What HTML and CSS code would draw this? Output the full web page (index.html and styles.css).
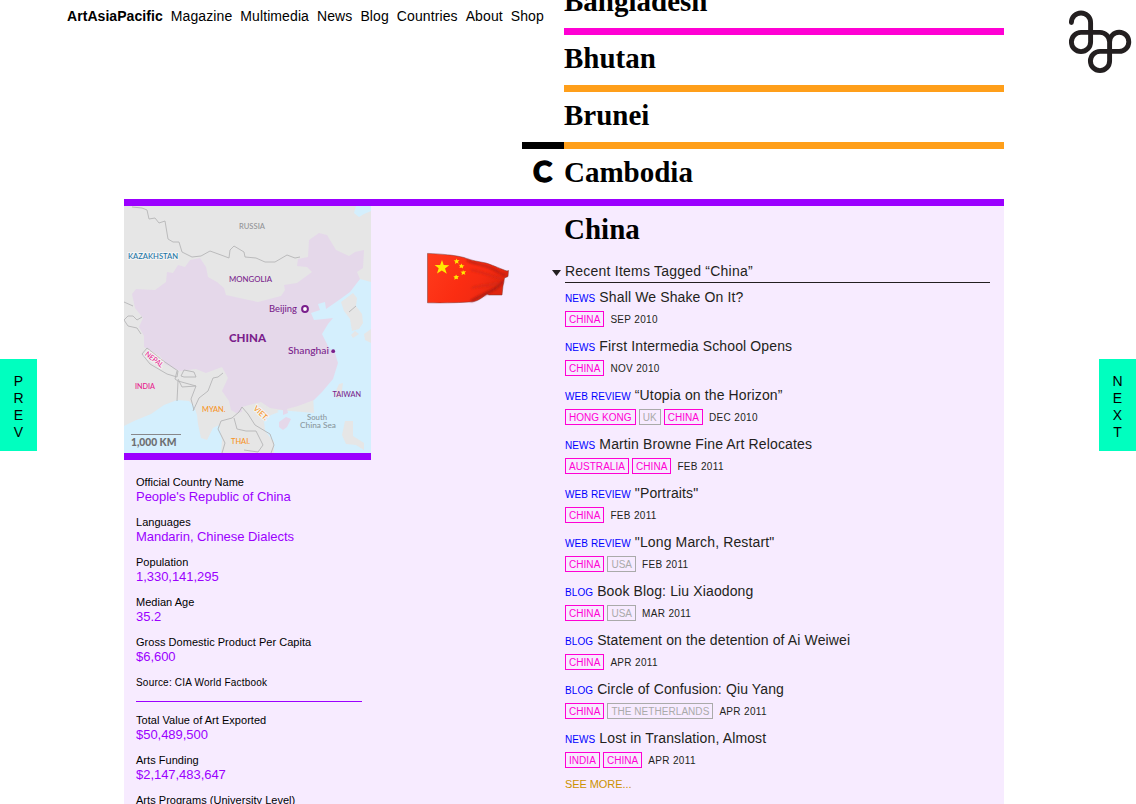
FILE: index.html
```html
<!DOCTYPE html>
<html lang="en">
<head>
<meta charset="utf-8">
<title>ArtAsiaPacific: Countries</title>
<link rel="stylesheet" href="styles.css">
</head>
<body>
<nav class="nav"><a class="brand">ArtAsiaPacific</a><a>Magazine</a><a>Multimedia</a><a>News</a><a>Blog</a><a>Countries</a><a>About</a><a>Shop</a></nav>
<svg class="logo" width="86" height="90" viewBox="0 0 86 90"><path d="M21.4 22.6A9.6 9.6 0 0 1 40.6 22.6V42A9.6 9.6 0 1 1 31 32.4H50A9.6 9.6 0 0 1 59.6 42V61A9.6 9.6 0 1 1 50 51.4H69A9.6 9.6 0 1 0 59.6 42" fill="none" stroke="#231f20" stroke-width="4.9" stroke-linecap="round"/></svg>
<a class="pager prev"><span>P</span><span>R</span><span>E</span><span>V</span></a>
<a class="pager next"><span>N</span><span>E</span><span>X</span><span>T</span></a>
<main class="page">
<section class="country first"><h2>Bangladesh</h2></section>
<section class="country pink"><h2>Bhutan</h2></section>
<section class="country orange"><h2>Brunei</h2></section>
<div class="row"><div class="letter">C</div><section class="country orange"><h2>Cambodia</h2></section></div>
<section class="open">
<aside class="facts">
<svg class="map" width="247" height="247" viewBox="0 0 247 247">
<rect width="247" height="247" fill="#e6e6e6"/>
<g fill="#d4effd">
<path d="M232 0 230 7 235 11 240 8 247 5V0Z"/>
<path d="M247 76 236 73 225 84 212 94 202 94 185 100 185 118 190 207 155 204 147 208 140 215 141 225 150 236 150 247H247Z"/>
<path d="M0 220 10 215 27 208 40 199 53 194 65 195 70 200 73 209 74 218 77 232 83 234 89 222 95 219 98 234 97 247H0Z"/>
</g>
<g fill="#e6e6e6">
<path d="M217 96 229 87 233 92 232 100 238 108 239 117 235 123 228 125 226 113 220 105Z"/>
<path d="M227 129 231 125 235 128 229 132ZM240 128 247 123V137L241 134Z"/>
<path d="M215 178 219 177 217 190 213 193 211 187ZM221 215 229 215 229 230 240 237 240 244 232 239 222 238 218 229Z"/>
<path d="M139 200 146 202 155 206 147 209 140 215Z"/>
</g>
<path fill="#e5d8ea" d="M8 88 12 83 31 84 42 76 43 66 49 67 54 59 61 61 66 54 76 52 82 61 84 71 93 76 100 82 102 89 120 93 134 96 157 90 161 84 160 79 173 77 188 66 183 61 173 60 174 53 184 51 185 34 195 27 203 29 212 44 225 50 231 46 240 44 239 62 233 66 236 73 226 86 215 94 202 103 201 96 194 98 196 104 187 107 190 114 200 113 209 112 204 118 198 128 205 142 211 147 214 157 209 173 198 186 190 194 174 200 163 203 164 207 159 209 159 204 146 202 137 196 125 199 118 201 118 206 112 207 107 204 105 195 98 185 104 172 98 161 82 167 72 163 56 165 41 158 36 150 20 141 20 130 15 121 19 112 11 102Z"/>
<path fill="#e5d8ea" d="M155 216 162 211 167 213 163 221 159 224 155 221Z"/>
<g fill="none" stroke="#b5b5b7" stroke-width=".9" stroke-linejoin="round">
<path d="M8 1 18 2 23 4 25 13 31 12 35 17 41 15 44 33 49 36 55 36 58 46 68 51 77 50 86 45 97 49 105 52 106 44 110 40 120 46 121 51 132 52 141 56 151 56 163 49 171 52 176 51"/>
<path d="M0 96 9 100M0 114 4 110 9 110 13 114 18 111M0 114 4 120 13 122 17 128"/>
<path d="M18 148 23 142 38 154 54 165 53 171 43 168 26 158Z"/>
<path d="M53 165 51 173 54 175 53 195M54 175 72 180 67 193 70 204M57 170 60 164 70 166 72 171 60 171ZM54 173 58 181 72 180M99 167 94 171 89 172 84 185 75 192 69 205"/>
<path d="M98 247 101 237 94 223 97 215 108 212 115 206 118 201 124 208 131 219 146 228 150 239 147 247M110 212 113 223 122 225 132 225 139 239 134 246 120 244"/>
<path d="M225 106 232 100"/>
</g>
<circle cx="181" cy="103" r="2.9" fill="#fff" stroke="#7a1f8c" stroke-width="2"/>
<circle cx="209.200" cy="145.200" r="1.900" fill="#7a1f8c"/>
<path d="M7 228.500H57" stroke="#87878a"/>
<g class="labels">
<text x="115" y="22.600" textLength="26" lengthAdjust="spacingAndGlyphs" fill="#929497">RUSSIA</text>
<text x="4" y="53" textLength="50" lengthAdjust="spacingAndGlyphs" fill="#1c75a5" class="halo">KAZAKHSTAN</text>
<text x="105" y="75.500" textLength="43" lengthAdjust="spacingAndGlyphs" fill="#7a1f8c">MONGOLIA</text>
<text x="145" y="106" textLength="28" lengthAdjust="spacingAndGlyphs" fill="#7a1f8c" class="city">Beijing</text>
<text x="105" y="136.200" textLength="37" lengthAdjust="spacingAndGlyphs" fill="#7a1f8c" class="major">CHINA</text>
<text x="164" y="148.200" textLength="41" lengthAdjust="spacingAndGlyphs" fill="#7a1f8c" class="city">Shanghai</text>
<text transform="translate(20.500 149)rotate(38)" textLength="21" lengthAdjust="spacingAndGlyphs" fill="#e6198c" class="halo">NEPAL</text>
<text x="11" y="182.500" textLength="20" lengthAdjust="spacingAndGlyphs" fill="#e6198c">INDIA</text>
<text x="78" y="205.500" textLength="23.500" lengthAdjust="spacingAndGlyphs" fill="#f7931e">MYAN.</text>
<text transform="translate(129 203)rotate(44)" textLength="17" lengthAdjust="spacingAndGlyphs" fill="#f7931e" class="halo">VIET.</text>
<text x="208.500" y="191" textLength="28.500" lengthAdjust="spacingAndGlyphs" fill="#7a1f8c">TAIWAN</text>
<text x="183" y="213.800" textLength="20" lengthAdjust="spacingAndGlyphs" fill="#8a979e">South</text>
<text x="176" y="222" textLength="36" lengthAdjust="spacingAndGlyphs" fill="#8a979e">China Sea</text>
<text x="107" y="237.800" textLength="19" lengthAdjust="spacingAndGlyphs" fill="#f7931e">THAI.</text>
<text x="7" y="240" textLength="45.500" lengthAdjust="spacingAndGlyphs" fill="#6d6e71" class="scale">1,000 KM</text>
</g>
</svg>
<dl class="data">
<div><dt>Official Country Name</dt><dd>People's Republic of China</dd></div>
<div><dt>Languages</dt><dd>Mandarin, Chinese Dialects</dd></div>
<div><dt>Population</dt><dd>1,330,141,295</dd></div>
<div><dt>Median Age</dt><dd>35.2</dd></div>
<div><dt>Gross Domestic Product Per Capita</dt><dd>$6,600</dd></div>
</dl>
<p class="source">Source: CIA World Factbook</p>
<dl class="data">
<div><dt>Total Value of Art Exported</dt><dd>$50,489,500</dd></div>
<div><dt>Arts Funding</dt><dd>$2,147,483,647</dd></div>
<div><dt>Arts Programs (University Level)</dt></div>
</dl>
</aside>
<svg class="flag" width="84" height="54" viewBox="0 0 84 54">
<defs><linearGradient id="cloth" x1="0" y1="0" x2="1" y2=".35"><stop offset="0" stop-color="#ff3c1c"/><stop offset=".55" stop-color="#fb2d12"/><stop offset=".75" stop-color="#f52b12"/><stop offset="1" stop-color="#e0260f"/></linearGradient>
<filter id="soft"><feGaussianBlur stdDeviation=".9"/></filter></defs>
<path d="M.5 1.400C15 2 27 3 37 5.500C45 9 52 9.500 59 11C68 14 74 17 80 19L81.500 18.500 81 24.500 77.500 26 76 34 75 43 62 43 60 42C54 46 51 50 42 50C28 51 13 51 .5 50.800Z" fill="url(#cloth)" stroke="#7a3b32" stroke-width=".5"/>
<g filter="url(#soft)" fill="none"><path d="M40 8C48 13 58 12 68 18S76 23 79 23" stroke="#b02014" stroke-width="1.600"/><path d="M76 29C72 35 67 38 58 42S49 47 44 49" stroke="#a51d14" stroke-width="2"/><path d="M44 18C56 20 64 24 75 27M45 36C53 33 62 34 71 31" stroke="#d22816" stroke-width="1.500"/></g>
<g fill="#ffea00"><path d="M15 8 16.700 13.100 22.300 13.200 18 16.400 19.800 21.800 14.800 18.500 10 21.600 11.700 16.300 7.600 13 13.100 13Z"/>
<path d="M29.500 6.500 30.300 8.300 32.500 8 30.900 9.700 31.800 11.800 29.800 10.700 28 12 28.300 9.800 26.700 8.500 28.900 8.300Z"/>
<path d="M34.500 11.500 35.300 13.300 37.500 13.500 35.800 14.800 36 16.500 34.300 15.400 32.500 16 33 14.100 31.600 12.700 33.600 13Z"/>
<path d="M36 18 36.800 19.400 39 19 37.600 20.900 38.400 22.800 36.500 22 34.600 23 35 21 33.500 19.600 35.500 19.700Z"/>
<path d="M29 22.500 30 24 32 24 30.700 25.500 31 27.300 29.100 26.800 27.300 27.700 27.700 25.700 26.400 24.500 28.400 24.100Z"/></g>
</svg>
<div class="content">
<h2>China</h2>
<h3>Recent Items Tagged “China”</h3>
<ul class="items">
<li><div class="title"><b>NEWS</b> Shall We Shake On It?</div><div class="tags"><i>CHINA</i><time>SEP 2010</time></div></li>
<li><div class="title"><b>NEWS</b> First Intermedia School Opens</div><div class="tags"><i>CHINA</i><time>NOV 2010</time></div></li>
<li><div class="title"><b>WEB REVIEW</b> “Utopia on the Horizon”</div><div class="tags"><i>HONG KONG</i><i class="grey">UK</i><i>CHINA</i><time>DEC 2010</time></div></li>
<li><div class="title"><b>NEWS</b> Martin Browne Fine Art Relocates</div><div class="tags"><i>AUSTRALIA</i><i>CHINA</i><time>FEB 2011</time></div></li>
<li><div class="title"><b>WEB REVIEW</b> "Portraits"</div><div class="tags"><i>CHINA</i><time>FEB 2011</time></div></li>
<li><div class="title"><b>WEB REVIEW</b> "Long March, Restart"</div><div class="tags"><i>CHINA</i><i class="grey">USA</i><time>FEB 2011</time></div></li>
<li><div class="title"><b>BLOG</b> Book Blog: Liu Xiaodong</div><div class="tags"><i>CHINA</i><i class="grey">USA</i><time>MAR 2011</time></div></li>
<li><div class="title"><b>BLOG</b> Statement on the detention of Ai Weiwei</div><div class="tags"><i>CHINA</i><time>APR 2011</time></div></li>
<li><div class="title"><b>BLOG</b> Circle of Confusion: Qiu Yang</div><div class="tags"><i>CHINA</i><i class="grey">THE NETHERLANDS</i><time>APR 2011</time></div></li>
<li><div class="title"><b>NEWS</b> Lost in Translation, Almost</div><div class="tags"><i>INDIA</i><i>CHINA</i><time>APR 2011</time></div></li>
</ul>
<a class="more">SEE MORE...</a>
</div>
</section>
</main>
</body>
</html>
```
FILE: styles.css
```css
* { box-sizing: border-box; }
html, body { margin: 0; height: 804px; overflow: hidden; background: #fff; }
body { position: relative; font-family: "Liberation Sans", Arial, sans-serif; color: #000; }
h2, h3, ul, dl, dd, p { margin: 0; padding: 0; }

.nav { position: absolute; left: 67px; top: 8px; display: flex; gap: 8px; font-size: 14px; line-height: 16px; letter-spacing: .1px; white-space: nowrap; }
.brand { font-weight: bold; letter-spacing: .06px; }
.logo { position: absolute; left: 1050px; top: 0; }
.pager { position: absolute; top: 359px; width: 37px; height: 92px; padding-top: 14px; background: #00ffbf; display: flex; flex-direction: column; align-items: center; font-size: 14px; line-height: 17px; }
.prev { left: 0; }
.next { right: 0; }

.page { width: 880px; margin-left: 124px; display: flex; flex-direction: column; align-items: flex-end; }
.country { width: 440px; height: 57px; border-top: 7px solid; }
.first { height: 28px; border: 0; display: flex; align-items: flex-end; }
.first h2 { padding: 0 0 8px; }
.pink { border-color: #ff00d4; }
.orange { border-color: #ff9f1a; }
h2 { font: bold 29px/38px "Liberation Serif", "Times New Roman", serif; padding-top: 4px; color: #000; }
.row { display: flex; }
.letter { width: 42px; border-top: 7px solid #000; font: 900 29px/36px Lato, sans-serif; padding: 4px 0 0 11px; height: 57px; -webkit-text-stroke: 1.3px #000; }

.open { width: 880px; height: 605px; border-top: 7px solid #9b00ff; background: #f7ebff; display: flex; overflow: hidden; }
.facts { width: 247px; flex: none; }
.map { display: block; height: 247px; width: 247px; }
.labels { font: 500 7.5px Lato, sans-serif; stroke-width: .25px; }
.labels text { stroke: currentColor; stroke: none; }
.labels .city { font-size: 9.5px; }
.labels .major { font-size: 11px; font-weight: 900; }
.labels .scale { font-size: 10.5px; font-weight: 900; }
.labels .halo { paint-order: stroke; stroke: #f4f4f4; stroke-width: 2px; }
.map + .data { border-top: 7px solid #9b00ff; padding-top: 15px; }
.data { display: flex; flex-direction: column; gap: 11px; padding-left: 12px; }
.data dt { font-size: 11px; line-height: 14px; white-space: nowrap; letter-spacing: .03px; }
.data dd { font-size: 13px; line-height: 14px; padding-top: 1px; letter-spacing: -.04px; color: #9b00ff; white-space: nowrap; }
.source { margin: 12px 9px 11px 12px; padding-bottom: 11px; border-bottom: 1px solid #9b00ff; font-size: 10px; line-height: 14px; letter-spacing: .2px; }
.flag { flex: none; margin: 46px 53px 0 56px; }

.content { width: 426px; flex: none; }
.content h2 { height: 50px; }
h3 { position: relative; margin-left: 1px; height: 27px; padding-top: 6px; border-bottom: 1px solid #231f20; font-size: 14px; line-height: 18px; font-weight: normal; letter-spacing: .22px; color: #231f20; }
h3::before { content: ""; position: absolute; left: -13px; top: 14px; width: 9px; height: 6px; background: #231f20; clip-path: polygon(0 0, 100% 0, 50% 100%); }
.items { list-style: none; margin: 3px 0 0 1px; }
.items li { height: 49px; display: flex; flex-direction: column; gap: 3px; }
.title { height: 22px; font-size: 14px; line-height: 22px; color: #231f20; letter-spacing: .13px; white-space: nowrap; }
.title b { font-size: 10px; font-weight: normal; color: #00f; letter-spacing: .08px; }
.tags { display: flex; gap: 3px; font-size: 10px; line-height: 15px; }
.tags i { height: 16px; border: 1px solid #ff00d4; padding: 0 3px; color: #ff00d4; font-style: normal; letter-spacing: .05px; }
.tags .grey { color: #aaa; border-color: #aaa; }
.tags time { margin-left: 3px; line-height: 17px; letter-spacing: .33px; color: #231f20; }
.more { display: block; margin: 0 0 0 1px; font-size: 11px; line-height: 16px; letter-spacing: -.08px; color: #cc9200; }
```
